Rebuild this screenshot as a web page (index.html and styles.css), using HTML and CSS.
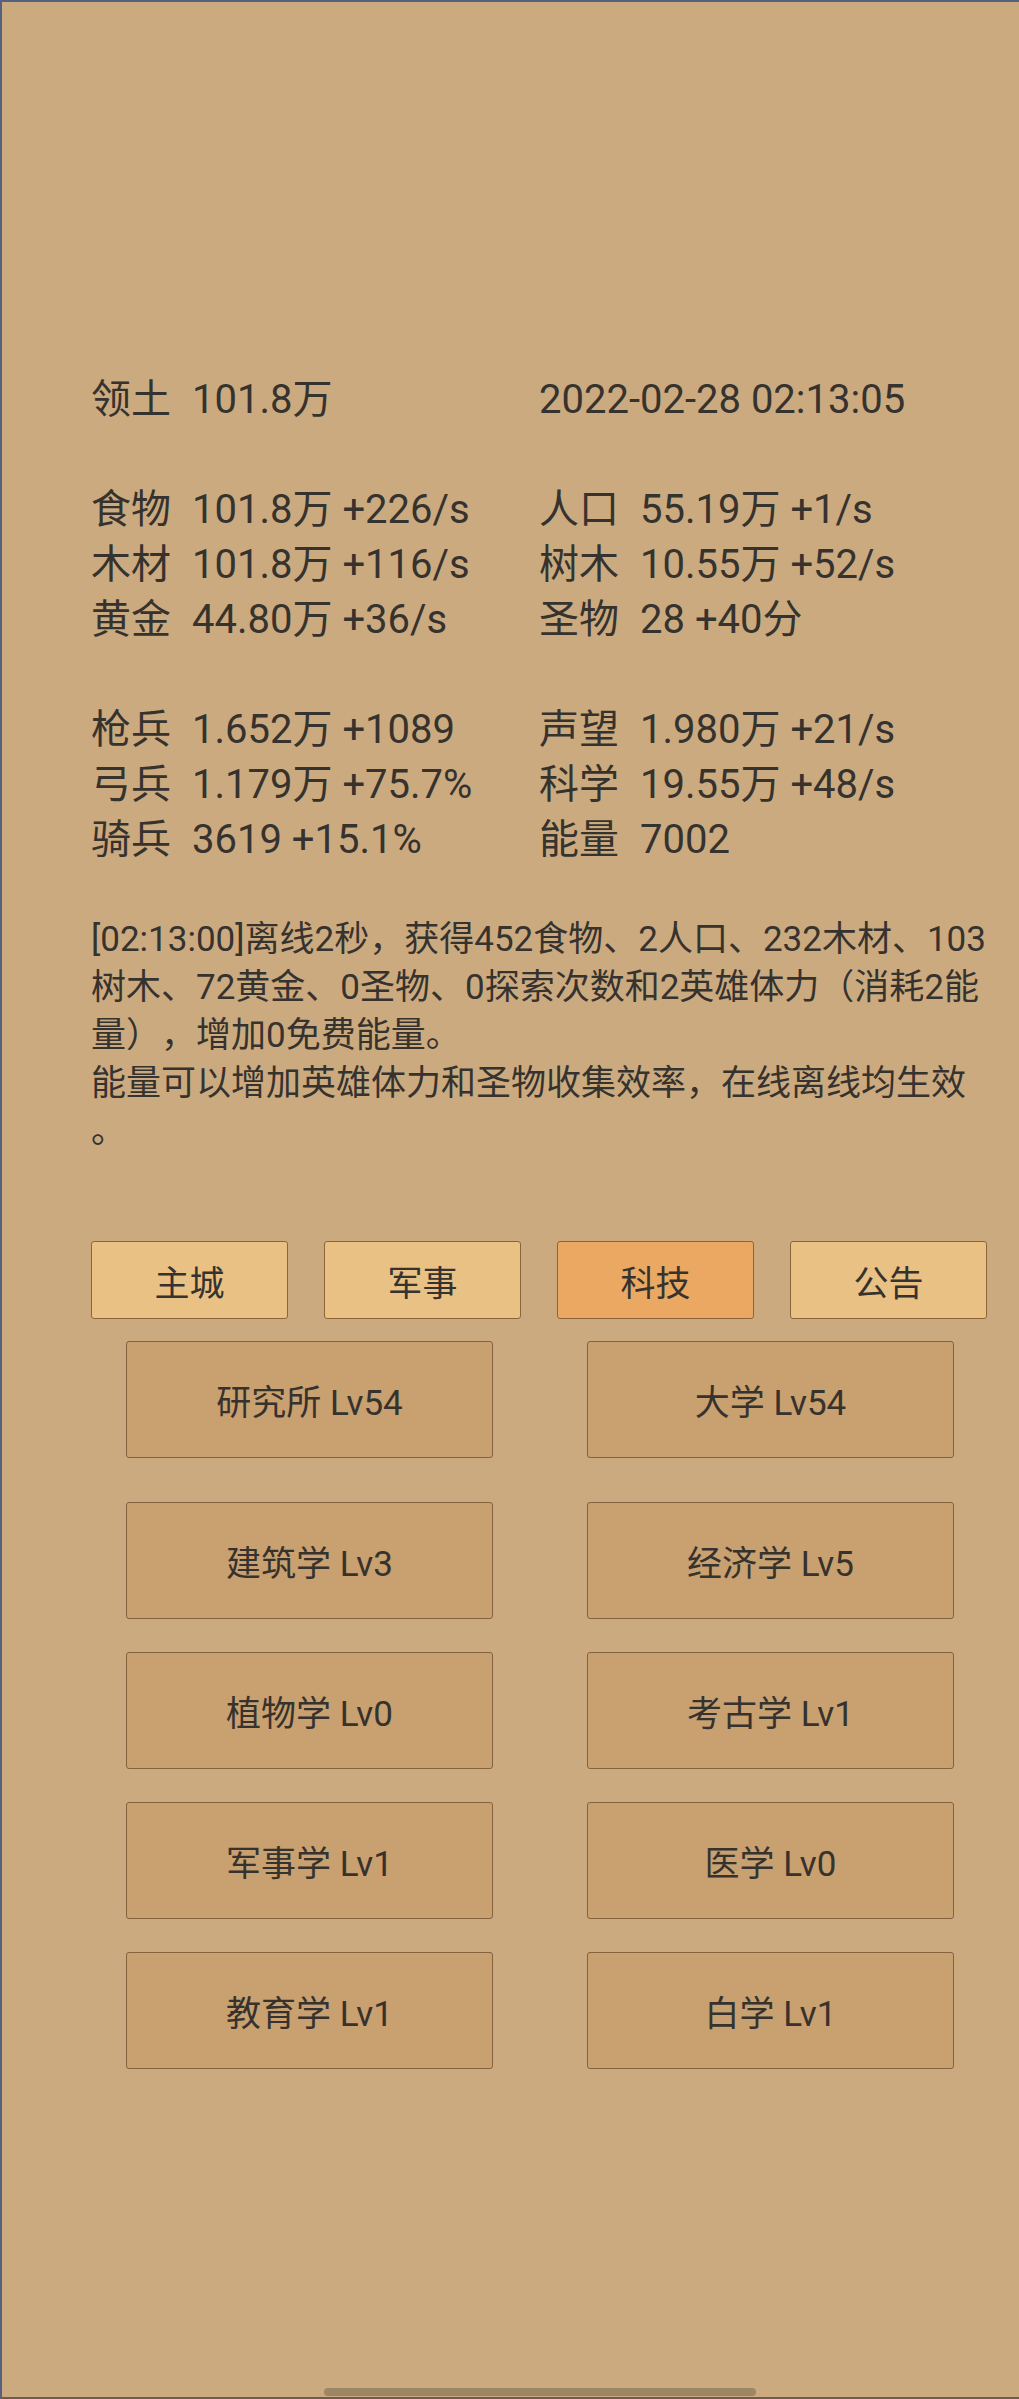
FILE: index.html
```html
<!DOCTYPE html>
<html lang="zh-CN">
<head>
<meta charset="utf-8">
<title>科技</title>
<link rel="stylesheet" href="styles.css">
</head>
<body>
<div class="screen">
  <section class="stats">
    <div class="stat-group">
      <div class="stat"><span class="label">领土</span><span class="value">101.8万</span></div>
      <div class="stat"><span class="value">2022-02-28 02:13:05</span></div>
    </div>
    <div class="stat-group">
      <div class="stat"><span class="label">食物</span><span class="value">101.8万 +226/s</span></div>
      <div class="stat"><span class="label">人口</span><span class="value">55.19万 +1/s</span></div>
      <div class="stat"><span class="label">木材</span><span class="value">101.8万 +116/s</span></div>
      <div class="stat"><span class="label">树木</span><span class="value">10.55万 +52/s</span></div>
      <div class="stat"><span class="label">黄金</span><span class="value">44.80万 +36/s</span></div>
      <div class="stat"><span class="label">圣物</span><span class="value">28 +40分</span></div>
    </div>
    <div class="stat-group">
      <div class="stat"><span class="label">枪兵</span><span class="value">1.652万 +1089</span></div>
      <div class="stat"><span class="label">声望</span><span class="value">1.980万 +21/s</span></div>
      <div class="stat"><span class="label">弓兵</span><span class="value">1.179万 +75.7%</span></div>
      <div class="stat"><span class="label">科学</span><span class="value">19.55万 +48/s</span></div>
      <div class="stat"><span class="label">骑兵</span><span class="value">3619 +15.1%</span></div>
      <div class="stat"><span class="label">能量</span><span class="value">7002</span></div>
    </div>
  </section>

  <p class="log">[02:13:00]离线2秒，获得452食物、2人口、232木材、103树木、72黄金、0圣物、0探索次数和2英雄体力（消耗2能量），增加0免费能量。<br>能量可以增加英雄体力和圣物收集效率，在线离线均生效。</p>

  <nav class="tabs">
    <button class="tab">主城</button>
    <button class="tab">军事</button>
    <button class="tab active">科技</button>
    <button class="tab">公告</button>
  </nav>

  <div class="grid buildings">
    <button class="item">研究所 Lv54</button>
    <button class="item">大学 Lv54</button>
  </div>

  <div class="grid sciences">
    <button class="item">建筑学 Lv3</button>
    <button class="item">经济学 Lv5</button>
    <button class="item">植物学 Lv0</button>
    <button class="item">考古学 Lv1</button>
    <button class="item">军事学 Lv1</button>
    <button class="item">医学 Lv0</button>
    <button class="item">教育学 Lv1</button>
    <button class="item">白学 Lv1</button>
  </div>

  <div class="scrollbar"></div>
</div>
</body>
</html>
```
FILE: styles.css
```css
html, body {
  margin: 0;
  padding: 0;
  background: #cbaa80;
}

.screen {
  position: relative;
  box-sizing: border-box;
  width: 1019px;
  height: 2399px;
  border-top: 2px solid #56607f;
  border-left: 2px solid #56607f;
  border-bottom: 2px solid #6e5d4c;
  padding: 370px 32px 0 89px;
  background: #cbaa80;
  color: #36322e;
  font-family: Roboto, "Noto Sans CJK SC", sans-serif;
  overflow: hidden;
}

.stats {
  font-size: 40px;
  line-height: 55px;
}

.stat-group {
  display: grid;
  grid-template-columns: 448px 448px;
  margin-bottom: 55px;
}

.stat-group:last-child {
  margin-bottom: 0;
}

.stat {
  white-space: nowrap;
}

.label {
  display: inline-block;
  width: 101px;
}

.log {
  margin: 49px 0 0;
  width: 905px;
  font-size: 35px;
  line-height: 48px;
  line-break: anywhere;
  text-spacing-trim: space-all;
}

.tabs {
  display: grid;
  grid-template-columns: repeat(4, 197px);
  column-gap: 36px;
  margin-top: 85px;
}

.tab {
  height: 78px;
  margin: 0;
  padding: 0;
  border: 1px solid #8d6439;
  border-radius: 3px;
  background: #eac185;
  color: #36322e;
  font-family: Roboto, "Noto Sans CJK SC", sans-serif;
  font-size: 35px;
}

.tab.active {
  background: #eba862;
}

.grid {
  display: grid;
  grid-template-columns: 367px 367px;
  column-gap: 94px;
  row-gap: 33px;
  padding: 0 35px;
}

.buildings {
  margin-top: 22px;
}

.sciences {
  margin-top: 44px;
}

.item {
  height: 117px;
  margin: 0;
  padding: 0;
  border: 1px solid #84623e;
  border-radius: 3px;
  background: #c9a06f;
  color: #36322e;
  font-family: Roboto, "Noto Sans CJK SC", sans-serif;
  font-size: 35px;
}

.scrollbar {
  position: absolute;
  left: 322px;
  bottom: 1px;
  width: 432px;
  height: 8px;
  border-radius: 4px;
  background: #9d8663;
}
```
